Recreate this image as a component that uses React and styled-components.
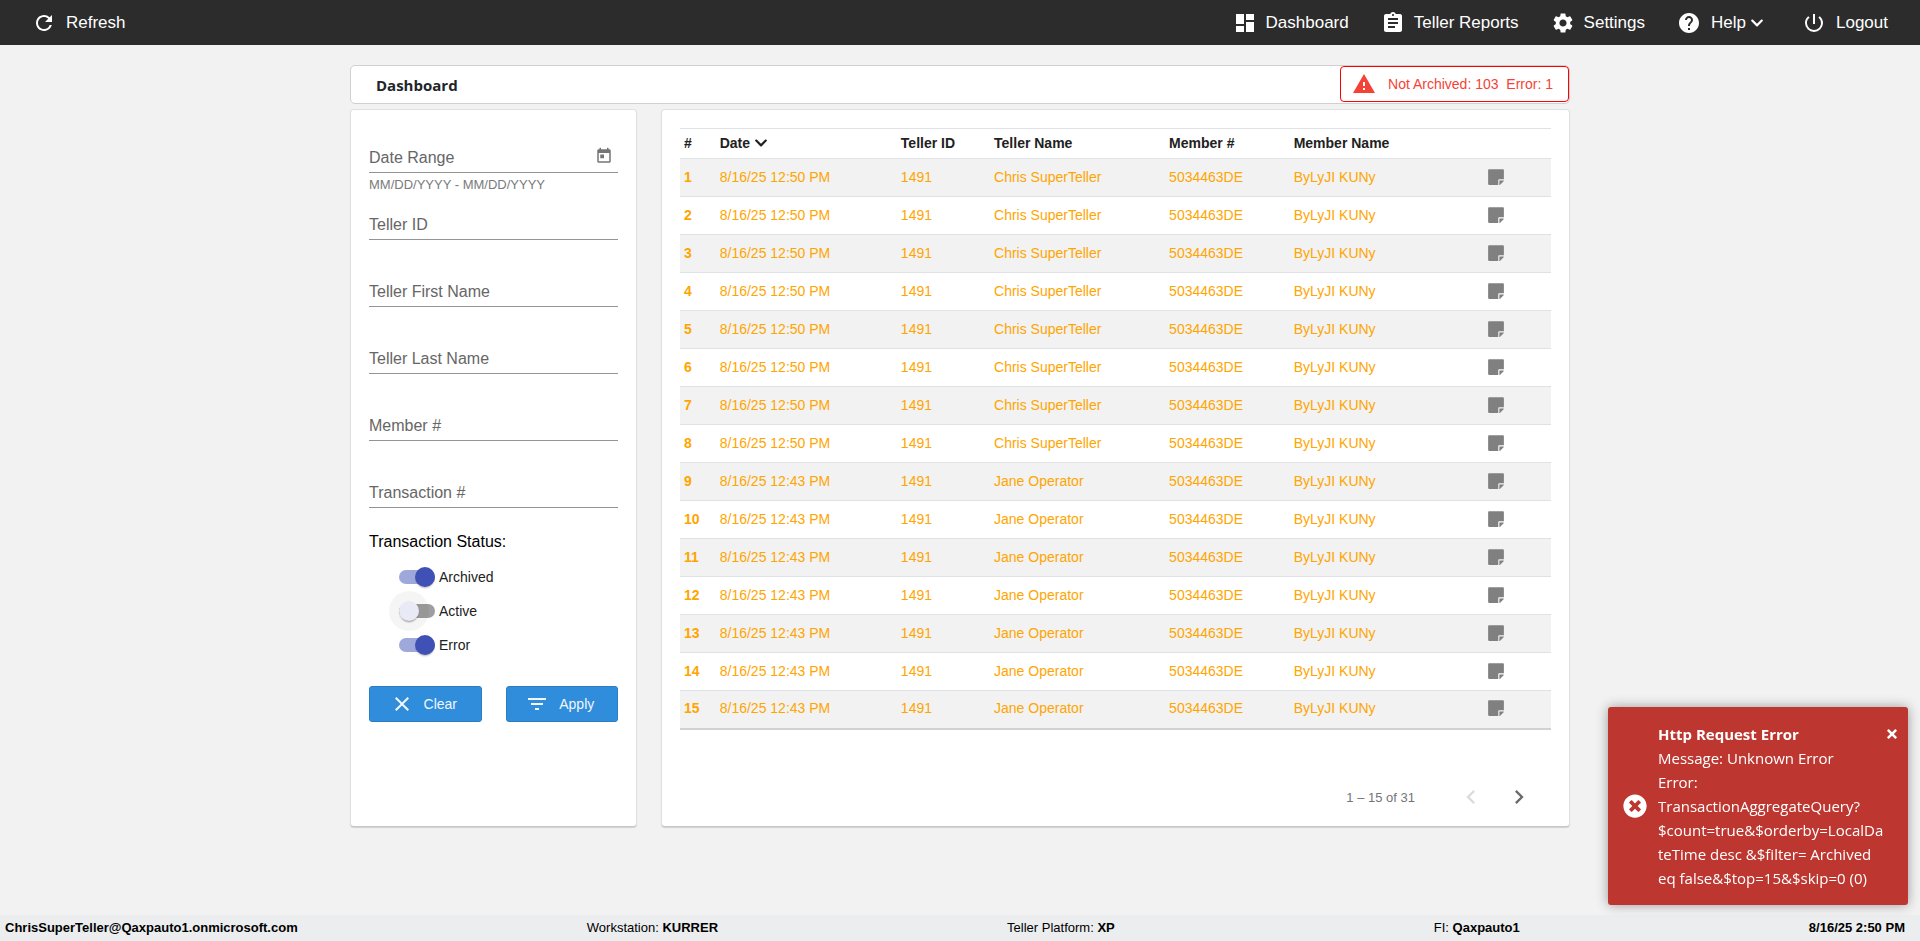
import React from "react";
import styled, { createGlobalStyle, css } from "styled-components";
import {
  MdAssignment,
  MdChevronLeft,
  MdChevronRight,
  MdClose,
  MdDashboard,
  MdFilterList,
  MdHelp,
  MdPowerSettingsNew,
  MdRefresh,
  MdSettings,
  MdToday,
  MdWarning,
} from "react-icons/md";
import { FaChevronDown, FaStickyNote, FaTimes, FaTimesCircle } from "react-icons/fa";

const GlobalStyle = createGlobalStyle`
  *, *::before, *::after { box-sizing: border-box; }
  body {
    margin: 0;
    background: #f2f2f2;
    color: #000;
    font-family: "Liberation Sans", Arial, sans-serif;
    font-size: 14px;
  }
  button, input { font: inherit; }
`;

const Page = styled.div`
  display: flex;
  flex-direction: column;
  min-height: 100vh;
`;

const TopBar = styled.header`
  display: flex;
  justify-content: space-between;
  align-items: center;
  flex-wrap: wrap;
  min-height: 45px;
  padding: 0 16px;
  background: #2c2c2c;
`;

const Nav = styled.nav`
  display: flex;
  flex-wrap: wrap;
`;

const navItem = css`
  display: flex;
  align-items: center;
  gap: 10px;
  height: 44px;
  padding: 0 16px;
  border: 0;
  background: none;
  color: #fff;
  font-size: 17px;
  text-decoration: none;
  cursor: pointer;

  & > svg {
    width: 24px;
    height: 24px;
  }
`;

const NavLink = styled.a`
  ${navItem}
  gap: 9px;
`;

const NavButton = styled.button`
  ${navItem}
`;

const NavCaption = styled.span`
  display: flex;
  align-items: center;
  gap: 4px;
  padding-right: ${(p) => (p.$menu ? 6 : 0)}px;
`;

const Main = styled.main`
  flex: 1;
  display: flex;
  flex-direction: column;
  gap: 5px;
  width: 100%;
  max-width: 1220px;
  margin: 0 auto;
  padding: 20px 0 24px;
`;

const TitleBar = styled.div`
  display: flex;
  align-items: flex-start;
  justify-content: space-between;
  height: 39px;
  border: 1px solid #d0d0d0;
  border-radius: 5px;
  background: #fff;
`;

const Title = styled.h1`
  margin: 0;
  padding-left: 25px;
  color: #212529;
  font-family: "Open Sans", "Noto Sans", sans-serif;
  font-size: 15px;
  font-weight: 700;
  line-height: 38px;
`;

const StatusAlert = styled.div`
  display: flex;
  align-items: center;
  gap: 12px;
  height: 36px;
  padding: 0 15px 0 11px;
  border: 1px solid #f00;
  border-radius: 4px;
  color: #f44336;
  white-space: pre;
`;

const Panels = styled.div`
  display: flex;
  align-items: stretch;
  gap: 24px;
`;

const Panel = styled.section`
  padding: 18px;
  border: 1px solid #e0e0e0;
  border-bottom-color: #c8c8c8;
  border-radius: 4px;
  background: #fff;
  box-shadow: 0 1px 1px rgba(0, 0, 0, 0.14);
`;

const FilterPanel = styled(Panel)`
  flex: 0 0 287px;
  padding-bottom: 104px;
`;

const Field = styled.div`
  display: grid;
  grid-template-rows: 45px 22px;
`;

const FieldLabel = styled.label`
  grid-area: 1 / 1;
  align-self: end;
  padding-bottom: 5px;
  color: #666;
  font-size: 16px;
  line-height: 20px;
`;

const FieldInput = styled.input`
  grid-area: 1 / 1;
  width: 100%;
  padding: 20px 28px 0 0;
  border: 0;
  border-bottom: 1px solid #949494;
  outline: 0;
  background: transparent;
  font-size: 16px;
`;

const CalendarButton = styled.button`
  grid-area: 1 / 1;
  place-self: end;
  display: flex;
  margin: 0 5px 8px;
  padding: 0;
  border: 0;
  background: none;
  color: #757575;
  font-size: 18px;
  cursor: pointer;
`;

const Hint = styled.span`
  padding-top: 4px;
  color: #7b7b7b;
  font-size: 13px;
  line-height: 16px;
`;

const StatusGroup = styled.fieldset`
  margin: 0;
  padding: 0 0 24px 30px;
  border: 0;
`;

const StatusLegend = styled.legend`
  margin-left: -30px;
  padding: 2px 0 8px;
  font-size: 16px;
  line-height: 20px;
`;

const ToggleLabel = styled.label`
  display: flex;
  align-items: center;
  gap: 4px;
  height: 34px;
  color: #212121;
`;

const Toggle = styled.input.attrs({ type: "checkbox" })`
  appearance: none;
  display: flex;
  align-items: center;
  width: 36px;
  height: 14px;
  margin: 0;
  border-radius: 7px;
  background: #9e9e9e;
  cursor: pointer;

  &::before {
    content: "";
    width: 20px;
    height: 20px;
    border-radius: 50%;
    background: #e8eaf6;
    box-shadow: 0 2px 2px -1px rgba(0, 0, 0, 0.4), 0 0 0 10px rgba(0, 0, 0, 0.04);
  }

  &:checked {
    justify-content: flex-end;
    background: #9fa8da;
  }

  &:checked::before {
    background: #3f51b5;
    box-shadow: 0 2px 2px -1px rgba(0, 0, 0, 0.3);
  }
`;

const Actions = styled.div`
  display: flex;
  gap: 24px;
`;

const ActionButton = styled.button`
  flex: 1;
  display: flex;
  align-items: center;
  justify-content: center;
  gap: 10px;
  height: 36px;
  padding: 0 4px 0 0;
  border: 1px solid #2a7ec4;
  border-radius: 3px;
  background: #2f8ddc;
  color: #f1f7fc;
  cursor: pointer;

  svg {
    font-size: 24px;
  }
`;

const ResultsPanel = styled(Panel)`
  flex: 1;
  min-width: 0;
  display: flex;
  flex-direction: column;
  justify-content: space-between;
  padding-bottom: 9px;
`;

const Table = styled.table`
  width: 100%;
  table-layout: fixed;
  border-collapse: collapse;
  border-bottom: 2px solid #d0d2d5;
  text-align: left;
`;

const Col = styled.col`
  width: ${(p) => p.$width};
`;

const HeadCell = styled.th`
  height: 30px;
  padding: 0 4px 2px;
  border-top: 1px solid #dee2e6;
  color: #212121;
  font-weight: 700;
`;

const SortButton = styled.button`
  display: flex;
  align-items: center;
  gap: 4px;
  padding: 0;
  border: 0;
  background: none;
  color: inherit;
  font-weight: 700;
  cursor: pointer;
`;

const Row = styled.tr`
  height: 38px;
  border-top: 1px solid #dee2e6;
  color: #ffa500;

  &:nth-child(odd) {
    background: #f2f2f2;
  }
`;

const Cell = styled.td`
  padding: 0 4px 2px;
`;

const RowHead = styled.th`
  padding: 0 4px 2px;
`;

const NoteButton = styled.button`
  display: flex;
  padding: 0;
  border: 0;
  background: none;
  color: #808080;
  font-size: 18px;
  cursor: pointer;
`;

const Paginator = styled.div`
  display: flex;
  align-items: center;
  justify-content: flex-end;
  padding-right: 8px;
  color: #757575;
  font-size: 13px;
`;

const PageRange = styled.span`
  margin-right: 32px;
`;

const PageButton = styled.button`
  display: grid;
  place-items: center;
  width: 48px;
  height: 40px;
  padding: 0;
  border: 0;
  background: none;
  color: #6b6b6b;
  font-size: 28px;

  &:disabled {
    color: #dcdcdc;
  }
`;

const Footer = styled.footer`
  display: flex;
  align-items: center;
  justify-content: space-between;
  flex-wrap: wrap;
  min-height: 26px;
  padding: 0 15px 2px 5px;
  background: #ebedef;
  font-size: 13px;
`;

const FooterItem = styled.span`
  padding-right: ${(p) => (p.$wide ? 30 : 0)}px;
`;

const Toast = styled.div`
  position: fixed;
  right: 12px;
  bottom: 36px;
  display: flex;
  align-items: center;
  gap: 11px;
  width: 300px;
  padding: 15px 9px 15px 15px;
  border-radius: 3px;
  background: #bd362f;
  box-shadow: 0 0 12px #999;
  color: #fff;
  font-family: "Open Sans", "Noto Sans", sans-serif;
  font-size: 15px;
  line-height: 24px;

  & > svg {
    flex: none;
    font-size: 24px;
  }
`;

const ToastText = styled.div`
  flex: 1;
  white-space: nowrap;
`;

const ToastHeading = styled.div`
  display: flex;
  align-items: center;
  justify-content: space-between;
  font-weight: 700;
`;

const ToastClose = styled.button`
  display: flex;
  padding: 0;
  border: 0;
  background: none;
  color: #fff;
  font-size: 14px;
  cursor: pointer;
`;

const navLinks = [
  { caption: "Dashboard", Icon: MdDashboard },
  { caption: "Teller Reports", Icon: MdAssignment },
  { caption: "Settings", Icon: MdSettings },
];

const filterFields = [
  { id: "teller-id", label: "Teller ID" },
  { id: "teller-first", label: "Teller First Name" },
  { id: "teller-last", label: "Teller Last Name" },
  { id: "member", label: "Member #" },
  { id: "transaction", label: "Transaction #" },
];

const statuses = [
  { label: "Archived", on: true },
  { label: "Active", on: false },
  { label: "Error", on: true },
];

const columnWidths = ["4.1%", "20.8%", "10.7%", "20.1%", "14.3%", "22.2%", "7.8%"];

const transactions = Array.from({ length: 15 }, (_, i) => ({
  number: i + 1,
  date: i < 8 ? "8/16/25 12:50 PM" : "8/16/25 12:43 PM",
  tellerId: "1491",
  teller: i < 8 ? "Chris SuperTeller" : "Jane Operator",
  member: "5034463DE",
  memberName: "ByLyJI KUNy",
}));

function Filters() {
  return (
    <FilterPanel aria-label="Filters">
      <Field>
        <FieldLabel htmlFor="date-range">Date Range</FieldLabel>
        <FieldInput id="date-range" aria-describedby="date-hint" />
        <CalendarButton aria-label="Open calendar"><MdToday /></CalendarButton>
        <Hint id="date-hint">MM/DD/YYYY - MM/DD/YYYY</Hint>
      </Field>
      {filterFields.map(({ id, label }) => (
        <Field key={id}>
          <FieldLabel htmlFor={id}>{label}</FieldLabel>
          <FieldInput id={id} />
        </Field>
      ))}
      <StatusGroup>
        <StatusLegend>Transaction Status:</StatusLegend>
        {statuses.map(({ label, on }) => (
          <ToggleLabel key={label}>
            <Toggle defaultChecked={on} />
            {label}
          </ToggleLabel>
        ))}
      </StatusGroup>
      <Actions>
        <ActionButton><MdClose />Clear</ActionButton>
        <ActionButton><MdFilterList />Apply</ActionButton>
      </Actions>
    </FilterPanel>
  );
}

function Results() {
  return (
    <ResultsPanel aria-label="Transactions">
      <Table>
        <colgroup>
          {columnWidths.map((width, i) => <Col key={i} $width={width} />)}
        </colgroup>
        <thead>
          <tr>
            <HeadCell>#</HeadCell>
            <HeadCell><SortButton>Date <FaChevronDown /></SortButton></HeadCell>
            <HeadCell>Teller ID</HeadCell>
            <HeadCell>Teller Name</HeadCell>
            <HeadCell>Member #</HeadCell>
            <HeadCell>Member Name</HeadCell>
            <HeadCell />
          </tr>
        </thead>
        <tbody>
          {transactions.map((t) => (
            <Row key={t.number}>
              <RowHead scope="row">{t.number}</RowHead>
              <Cell>{t.date}</Cell>
              <Cell>{t.tellerId}</Cell>
              <Cell>{t.teller}</Cell>
              <Cell>{t.member}</Cell>
              <Cell>{t.memberName}</Cell>
              <Cell><NoteButton aria-label="Notes"><FaStickyNote /></NoteButton></Cell>
            </Row>
          ))}
        </tbody>
      </Table>
      <Paginator>
        <PageRange>1 – 15 of 31</PageRange>
        <PageButton aria-label="Previous page" disabled><MdChevronLeft /></PageButton>
        <PageButton aria-label="Next page"><MdChevronRight /></PageButton>
      </Paginator>
    </ResultsPanel>
  );
}

export default function App() {
  return (
    <Page>
      <GlobalStyle />
      <TopBar>
        <NavButton><MdRefresh />Refresh</NavButton>
        <Nav>
          {navLinks.map(({ caption, Icon }) => (
            <NavLink key={caption} href="#"><Icon />{caption}</NavLink>
          ))}
          <NavButton>
            <MdHelp />
            <NavCaption $menu>Help <FaChevronDown size={14} /></NavCaption>
          </NavButton>
          <NavButton><MdPowerSettingsNew />Logout</NavButton>
        </Nav>
      </TopBar>
      <Main>
        <TitleBar>
          <Title>Dashboard</Title>
          <StatusAlert role="status">
            <MdWarning size={24} />
            <span>{"Not Archived: 103  Error: 1"}</span>
          </StatusAlert>
        </TitleBar>
        <Panels>
          <Filters />
          <Results />
        </Panels>
      </Main>
      <Footer>
        <FooterItem><b>ChrisSuperTeller@Qaxpauto1.onmicrosoft.com</b></FooterItem>
        <FooterItem>Workstation: <b>KURRER</b></FooterItem>
        <FooterItem $wide>Teller Platform: <b>XP</b></FooterItem>
        <FooterItem>FI: <b>Qaxpauto1</b></FooterItem>
        <FooterItem><b>8/16/25 2:50 PM</b></FooterItem>
      </Footer>
      <Toast role="alert">
        <FaTimesCircle />
        <ToastText>
          <ToastHeading>
            Http Request Error
            <ToastClose aria-label="Close"><FaTimes /></ToastClose>
          </ToastHeading>
          Message: Unknown Error<br />
          Error:<br />
          TransactionAggregateQuery?<br />
          $count=true&amp;$orderby=LocalDa<br />
          teTime desc &amp;$filter= Archived<br />
          eq false&amp;$top=15&amp;$skip=0 (0)
        </ToastText>
      </Toast>
    </Page>
  );
}
